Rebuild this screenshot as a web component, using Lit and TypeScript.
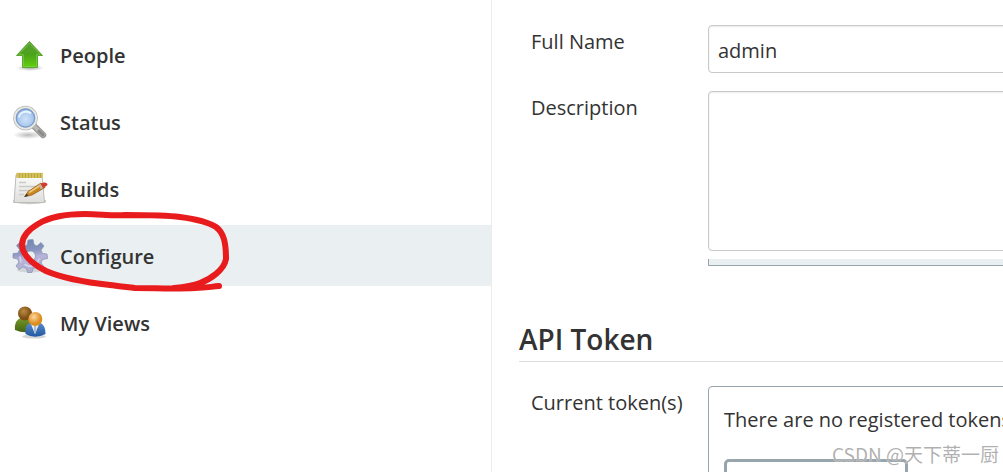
import { LitElement, html, css, svg } from "lit";
import { customElement } from "lit/decorators.js";
import { classMap } from "lit/directives/class-map.js";

const arrowIcon = svg`
  <defs>
    <linearGradient id="leaf" x1="0" y1="0" x2="0" y2="1">
      <stop offset="0" stop-color="#5c9e33"/><stop offset=".5" stop-color="#4ca31c"/><stop offset="1" stop-color="#62d00a"/>
    </linearGradient>
    <radialGradient id="ashade"><stop offset="0" stop-color="#777" stop-opacity=".6"/><stop offset="1" stop-color="#777" stop-opacity="0"/></radialGradient>
  </defs>
  <ellipse cx="18" cy="31" rx="14" ry="3" fill="url(#ashade)"/>
  <path d="M17.500 4.500L30.500 18.500H25.500V30.500H10.500V18.500H4.500Z" fill="url(#leaf)" stroke="#5aa832" stroke-linejoin="round"/>
  <path d="M17.500 6L28 17.500H24.500V29.500H11.500V17.500H7Z" fill="none" stroke="#8fd45f" stroke-opacity=".5"/>`;

const searchIcon = svg`
  <defs>
    <radialGradient id="lens" cx=".5" cy=".55"><stop offset="0" stop-color="#cfe2f8"/><stop offset=".7" stop-color="#a9c8ee"/><stop offset="1" stop-color="#7fa6d8"/></radialGradient>
    <radialGradient id="sshade"><stop offset="0" stop-color="#777" stop-opacity=".5"/><stop offset="1" stop-color="#777" stop-opacity="0"/></radialGradient>
  </defs>
  <ellipse cx="16" cy="31" rx="15" ry="4" fill="url(#sshade)"/>
  <path d="M22 22L31 31" stroke="#9c9c9a" stroke-width="6.500" stroke-linecap="round"/>
  <path d="M22 22L31 31" stroke="#b9b9b6" stroke-width="3.500" stroke-linecap="round"/>
  <path d="M27 27L31 31" stroke="#8a8a8a" stroke-width="3" stroke-linecap="round"/>
  <circle cx="13.500" cy="14" r="10.800" fill="url(#lens)" stroke="#b4b4b2" stroke-width="3"/>
  <circle cx="13.500" cy="14" r="10.800" fill="none" stroke="#e8e8e6" stroke-width="1.600"/>
  <circle cx="13.500" cy="14" r="9" fill="none" stroke="#6f99d2" stroke-width="1"/>
  <path d="M7 13.500a7 6 0 0 1 12-4" fill="none" stroke="#e9f2fd" stroke-width="2"/>`;

const notepadIcon = svg`
  <defs>
    <linearGradient id="paper" x1="0" y1="0" x2="0" y2="1"><stop offset="0" stop-color="#fbfbfa"/><stop offset="1" stop-color="#dededd"/></linearGradient>
  </defs>
  <path d="M1 31.500Q18 35 34 31.500V29H1Z" fill="#aaa" opacity=".6"/>
  <path d="M4 4H30L32.500 31.500H2Z" fill="url(#paper)" stroke="#bcbcb9" stroke-linejoin="round"/>
  <rect x="4.500" y="2" width="26" height="5" fill="#bba93f"/>
  <path d="M6 1.500V7M9 1.500V7M12 1.500V7M15 1.500V7M18 1.500V7M21 1.500V7M24 1.500V7M27 1.500V7M30 1.500V7" stroke="#e0cf6c" stroke-width="1.200"/>
  <path d="M7 11.500H14M7 15.500H26M7 19.500H20M7 23.500H12" stroke="#c9c9c7" stroke-width="1.400"/>
  <path d="M13 25.500L16 20.500L29 12L33 16.500L20 24Z" fill="#c98824" stroke="#94601a" stroke-width=".8"/>
  <path d="M17 21.500L29.500 13.500" stroke="#f2c878" stroke-width="1.600"/>
  <path d="M12 26L14.500 22.500L16.500 25Z" fill="#4d3a20"/>
  <path d="M28.500 13L31.500 11.500Q35.500 11 35.500 14L31.500 17Z" fill="#d23b32"/>
  <path d="M27.300 13.800L30 17.600" stroke="#b9bbb9" stroke-width="2"/>`;

const gearIcon = svg`
  <defs>
    <linearGradient id="steel" x1=".4" y1="0" x2=".6" y2="1"><stop offset="0" stop-color="#7184b0"/><stop offset=".35" stop-color="#8795bf"/><stop offset=".55" stop-color="#b6b3d8"/><stop offset="1" stop-color="#aeb0cf"/></linearGradient>
  </defs>
  <ellipse cx="18" cy="32" rx="13" ry="2.500" fill="#999" opacity=".3"/>
  <path fill-rule="evenodd" fill="url(#steel)" stroke="#8d95b8" stroke-width=".8" stroke-linejoin="round"
    d="M15 7L16 2L21 1.500L22 6.500L25 8L29 4.500L32 8L29 12L30.500 15.500L35 16L35.500 20.500L30.500 21.500L29 25L32 29L28.500 32L24 29.500L21 30.500L20 34.500L15.500 34.500L14.500 30.500L11 29L7 31.500L4 28L7 24L5.500 21L1 20L1 15.500L6 15L7.500 11.500L4.500 7.500L8 4L12 8ZM18.500 13A5 5 0 1 0 18.500 23A5 5 0 1 0 18.500 13Z"/>
  <path d="M9 24L8 19M25 26L27 21M13 26.500L17 28.500L22 27.500" fill="none" stroke="#d9d4ef" stroke-width="1.500" stroke-linecap="round"/>`;

const usersIcon = svg`
  <defs>
    <radialGradient id="tan" cx=".4" cy=".35"><stop offset="0" stop-color="#bc8b45"/><stop offset="1" stop-color="#7d4f12"/></radialGradient>
    <radialGradient id="gold" cx=".4" cy=".35"><stop offset="0" stop-color="#fbd9a0"/><stop offset="1" stop-color="#dd8c1e"/></radialGradient>
    <linearGradient id="olive" x1="0" y1="0" x2="0" y2="1"><stop offset="0" stop-color="#77962c"/><stop offset="1" stop-color="#43640d"/></linearGradient>
    <linearGradient id="navy" x1="0" y1="0" x2="0" y2="1"><stop offset="0" stop-color="#5a8bcb"/><stop offset="1" stop-color="#2158a2"/></linearGradient>
  </defs>
  <ellipse cx="22" cy="31.500" rx="12" ry="2" fill="#888" opacity=".35"/>
  <path d="M3 25Q2 15 9 13H18Q23 15 22 26Q12 29 3 25Z" fill="url(#olive)"/>
  <circle cx="13" cy="8.500" r="7" fill="url(#tan)"/>
  <path d="M13.500 29Q12.500 20 18 17.500H28Q33.500 20 33.500 29Q23 34.500 13.500 29Z" fill="url(#navy)"/>
  <path d="M18.500 18L23 29L27.500 18Z" fill="#f1f3f7"/>
  <path d="M22.300 20H24L24.500 26L23 29L21.800 26Z" fill="#a9b9d4"/>
  <circle cx="23.300" cy="14" r="7" fill="url(#gold)"/>`;

const items = [
  { label: "People", icon: arrowIcon, active: false },
  { label: "Status", icon: searchIcon, active: false },
  { label: "Builds", icon: notepadIcon, active: false },
  { label: "Configure", icon: gearIcon, active: true },
  { label: "My Views", icon: usersIcon, active: false },
];

@customElement("side-nav")
class SideNav extends LitElement {
  static styles = css`
    :host { display: block; padding-top: 24px; }
    .list { display: flex; flex-direction: column; gap: 6px; }
    .wrap { position: relative; }
    .item {
      display: flex; align-items: center; gap: 12px;
      box-sizing: border-box; height: 61px; padding: 2px 12px 0;
      color: #333; text-decoration: none;
      font-size: 20px; line-height: 28px; font-weight: 600;
    }
    .active { background: #eaeff2; }
    .icon { display: block; flex: none; width: 36px; height: 36px; margin-bottom: 2px; }
    .mark { position: absolute; left: 0; top: -15px; width: 240px; height: 84px; pointer-events: none; }
  `;
  render() {
    return html`<nav class="list">
      ${items.map((i) => html`<div class="wrap">
        <a href="#" class=${classMap({ item: true, active: i.active })}>
          <svg class="icon" viewBox="0 0 36 36" aria-hidden="true">${i.icon}</svg>
          <span>${i.label}</span>
        </a>
        ${i.active ? html`<svg class="mark" viewBox="0 210 240 84" aria-hidden="true">
          <path d="M219 286C209 287 205 288 195 288C174 289 155 288 135 288C125 287 118 286 110 285C82 282 60 277 46 271C34 265 26 258 23 250C19 238 28 230 38 224C51 216 68 214 85 214C100 214 112 216 125 215C150 215 165 215 180 217C195 219 208 222 216 227C224 233 226 243 226 259C224 270 211 279 200 283C192 286 184 287 174 288"
            fill="none" stroke="#e81c1c" stroke-width="6" stroke-linecap="round" stroke-linejoin="round"/>
        </svg>` : ""}
      </div>`)}
    </nav>`;
  }
}

@customElement("user-form")
class UserForm extends LitElement {
  static styles = css`
    :host { display: block; min-width: 560px; padding: 25px 0 0 27px; }
    .row { display: grid; grid-template-columns: 177px 1fr; padding-left: 12px; }
    .row + .row { margin-top: 18px; }
    .label { font-size: 20px; line-height: 28px; padding-top: 3px; color: #333; }
    .field {
      display: block; box-sizing: border-box; width: 100%; margin: 0;
      border: 1px solid #c6c8c9; border-radius: 4px; background: #fff;
      box-shadow: inset 0 1px 2px rgba(0, 0, 0, .08);
      padding: 2px 9px 0; color: #333;
      font-family: inherit; font-size: 20px; line-height: 28px; resize: none; outline: none;
    }
    .input { height: 48px; }
    .area { height: 160px; }
    .handle { height: 6px; margin-top: 8px; background: #eaeff2; border: solid #98a5ac; border-width: 0 0 1px 1px; }
    .title {
      margin: 55px 0 24px; padding-bottom: 4px; border-bottom: 1px solid #dcdee0;
      font-size: 28px; line-height: 36px; font-weight: 600; color: #333;
    }
    .tokens { border: 1px solid #98a5ac; border-radius: 4px; padding: 19px 15px; }
    .empty { margin: 0 0 25px; font-size: 20px; line-height: 28px; white-space: nowrap; }
    .add { display: block; width: 184px; height: 48px; border: 3px solid #98a5ac; border-radius: 5px; background: #fff; }
  `;
  render() {
    return html`<form>
      <div class="row">
        <label class="label" for="name">Full Name</label>
        <input class="field input" id="name" type="text" .value=${"admin"} />
      </div>
      <div class="row">
        <label class="label" for="description">Description</label>
        <div>
          <textarea class="field area" id="description"></textarea>
          <div class="handle"></div>
        </div>
      </div>
      <h2 class="title">API Token</h2>
      <div class="row">
        <span class="label">Current token(s)</span>
        <div class="tokens">
          <p class="empty">There are no registered tokens</p>
          <button class="add" type="button" aria-label="Add new Token"></button>
        </div>
      </div>
    </form>`;
  }
}

@customElement("app-root")
class AppRoot extends LitElement {
  static styles = css`
    :host {
      display: flex; position: relative; height: 100vh; overflow: hidden;
      background: #fff; color: #333;
      font-family: "Segoe UI", "Open Sans", "Noto Sans", sans-serif;
    }
    .side { flex: 0 0 491px; border-right: 1px solid #ececec; }
    .main { flex: 1; min-width: 0; }
    .credit {
      position: absolute; right: 4px; bottom: 4px;
      font-family: "Noto Sans CJK SC", sans-serif;
      font-size: 19px; line-height: 28px; color: rgba(150, 150, 150, .75);
      text-shadow: 0 0 1px #fff;
    }
  `;
  render() {
    return html`
      <side-nav class="side"></side-nav>
      <main class="main"><user-form></user-form></main>
      <span class="credit">CSDN @天下蒂一厨</span>`;
  }
}
